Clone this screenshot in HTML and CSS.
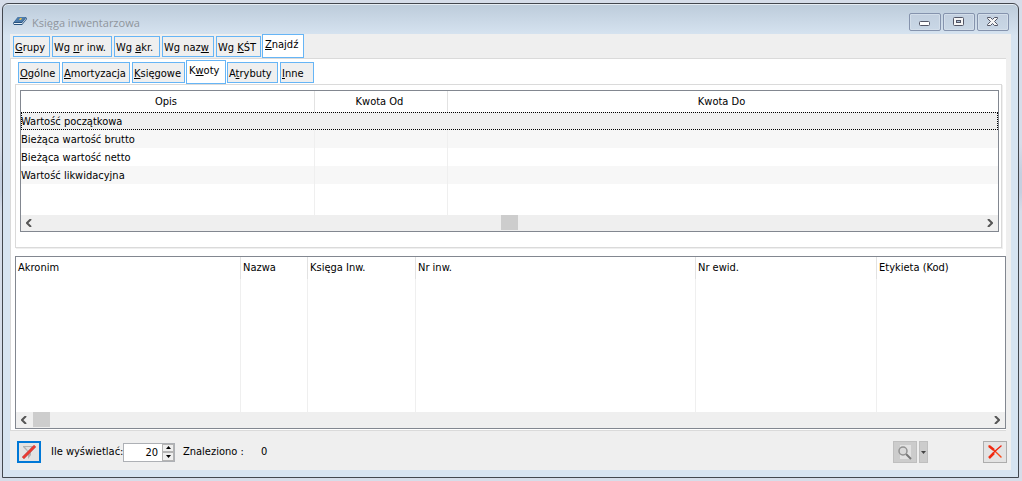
FILE: index.html
```html
<!DOCTYPE html>
<html lang="pl">
<head>
<meta charset="utf-8">
<title>Księga inwentarzowa</title>
<link rel="stylesheet" href="styles.css">
</head>
<body>
<div class="window">
  <header class="titlebar">
    <svg class="app-icon" width="14" height="10" viewBox="0 0 14 10"><path d="M0 7 5 1h8l1 2-5 6H1z" fill="#27527f"/><path d="M1 6 5 1h8L9 6z" fill="#4d7cac"/><path d="M1 7h8l4-5v1L9 8H1z" fill="#e8f0f6"/><path d="M6 4 7 2h2L8 4z" fill="#e2bd52"/></svg>
    <h1 class="title">Księga inwentarzowa</h1>
    <div class="window-buttons">
      <button class="window-button" aria-label="Minimalizuj"><svg width="12" height="10" viewBox="0 0 12 10"><rect x=".5" y="4.500" width="10" height="4" rx="1" fill="#fff" stroke="#535666"/></svg></button>
      <button class="window-button" aria-label="Maksymalizuj"><svg width="12" height="10" viewBox="0 0 12 10"><rect x=".5" y=".5" width="10" height="8" rx="1" fill="#f5f5f5" stroke="#535666"/><rect x="3.500" y="3.500" width="4" height="2" fill="#a9bdd5" stroke="#535666"/></svg></button>
      <button class="window-button" aria-label="Zamknij"><svg width="12" height="10" viewBox="0 0 12 10"><path d="M.5.5h3l2 2 2-2h3v1l-3 3 3 3v1h-3l-2-2-2 2h-3v-1l3-3-3-3z" fill="#f5f5f5" stroke="#535666"/></svg></button>
    </div>
  </header>
  <main class="client">
    <div class="tabs" role="tablist">
      <button class="tab w37" role="tab"><u>G</u>rupy</button>
      <button class="tab w60" role="tab">Wg <u>n</u>r inw.</button>
      <button class="tab w46" role="tab">Wg <u>a</u>kr.</button>
      <button class="tab w52" role="tab">Wg naz<u>w</u></button>
      <button class="tab w45" role="tab">Wg <u>K</u>ŚT</button>
      <button class="tab active w42" role="tab" aria-selected="true"><u>Z</u>najdź</button>
    </div>
    <section class="page">
      <div class="tabs inner-tabs" role="tablist">
        <button class="tab w42" role="tab"><u>O</u>gólne</button>
        <button class="tab w68" role="tab"><u>A</u>mortyzacja</button>
        <button class="tab w53" role="tab"><u>K</u>sięgowe</button>
        <button class="tab active w40" role="tab" aria-selected="true">K<u>w</u>oty</button>
        <button class="tab w51" role="tab">A<u>t</u>rybuty</button>
        <button class="tab w34" role="tab"><u>I</u>nne</button>
      </div>
      <div class="inner-page">
        <div class="list">
          <table class="grid amounts">
            <colgroup><col class="c-opis"><col class="c-od"><col></colgroup>
            <thead><tr><th>Opis</th><th>Kwota Od</th><th>Kwota Do</th></tr></thead>
            <tbody>
              <tr class="selected"><td>Wartość początkowa</td><td></td><td></td></tr>
              <tr class="odd"><td>Bieżąca wartość brutto</td><td></td><td></td></tr>
              <tr><td>Bieżąca wartość netto</td><td></td><td></td></tr>
              <tr class="odd"><td>Wartość likwidacyjna</td><td></td><td></td></tr>
              <tr class="filler"><td></td><td></td><td></td></tr>
            </tbody>
          </table>
          <div class="scrollbar">
            <button class="arrow" aria-label="W lewo"><svg width="7" height="8" viewBox="0 0 7 8"><path d="M5 0 1 4l4 4" fill="none" stroke="#555" stroke-width="2"/></svg></button>
            <div class="track centered"><div class="thumb"></div></div>
            <button class="arrow" aria-label="W prawo"><svg width="7" height="8" viewBox="0 0 7 8"><path d="m2 0 4 4-4 4" fill="none" stroke="#555" stroke-width="2"/></svg></button>
          </div>
        </div>
      </div>
      <div class="list results">
        <table class="grid found">
          <colgroup><col class="c-akronim"><col class="c-nazwa"><col class="c-ksiega"><col class="c-nrinw"><col class="c-ewid"><col></colgroup>
          <thead><tr><th>Akronim</th><th>Nazwa</th><th>Księga Inw.</th><th>Nr inw.</th><th>Nr ewid.</th><th>Etykieta (Kod)</th></tr></thead>
          <tbody><tr class="filler"><td></td><td></td><td></td><td></td><td></td><td></td></tr></tbody>
        </table>
        <div class="scrollbar">
          <button class="arrow" aria-label="W lewo"><svg width="7" height="8" viewBox="0 0 7 8"><path d="M5 0 1 4l4 4" fill="none" stroke="#555" stroke-width="2"/></svg></button>
          <div class="track"><div class="thumb"></div></div>
          <button class="arrow" aria-label="W prawo"><svg width="7" height="8" viewBox="0 0 7 8"><path d="m2 0 4 4-4 4" fill="none" stroke="#555" stroke-width="2"/></svg></button>
        </div>
      </div>
    </section>
    <footer class="footer">
      <button class="tool focused" aria-label="Filtr"><svg width="16" height="16" viewBox="0 0 16 16"><path d="M2 2h12v1l-4 5v3l-3 4V8L2 3z" fill="#b0b0b0"/><path d="M4 3h6L8 8z" fill="#dedede"/><path d="M2 14 14 2" stroke="#b8454a" stroke-width="3"/><path d="M2 14 14 2" stroke="#ee3a30" stroke-width="2"/></svg></button>
      <label class="limit-label" for="limit">Ile wyświetlać:</label>
      <div class="spin">
        <input id="limit" class="spin-input" type="text" value="20">
        <div class="spin-buttons">
          <button class="spin-button" aria-label="Więcej"><svg width="5" height="3" viewBox="0 0 5 3"><path d="M0 3 2.500 0 5 3z"/></svg></button>
          <button class="spin-button" aria-label="Mniej"><svg width="5" height="3" viewBox="0 0 5 3"><path d="M0 0h5L2.500 3z"/></svg></button>
        </div>
      </div>
      <span class="found-label">Znaleziono :</span>
      <output class="found-count">0</output>
      <div class="actions">
        <button class="tool disabled" aria-label="Podgląd"><svg width="16" height="16" viewBox="0 0 16 16"><path d="M3 1h11v14H3z" fill="#e2e2e2"/><path d="m9 10 5 5" stroke="#777" stroke-width="2"/><circle cx="6" cy="7" r="4" fill="#dadada" stroke="#929292" stroke-width="1.500"/></svg></button>
        <button class="tool disabled drop" aria-label="Rozwiń"><svg width="5" height="3" viewBox="0 0 5 3"><path d="M0 0h5L2.500 3z" fill="#444"/></svg></button>
        <button class="tool close" aria-label="Zamknij okno"><svg width="16" height="16" viewBox="0 0 16 16"><path d="M2 2c4 3 8 7 12 11" stroke="#f94a1a" stroke-width="1.500" stroke-linecap="round" fill="none"/><path d="M14 2C10 5 6 9 3 13" stroke="#ee2410" stroke-width="1.500" stroke-linecap="round" fill="none"/><path d="m2 2 5 4M2 14l5-5" stroke="#f02a12" stroke-width="2.500"/></svg></button>
      </div>
    </footer>
  </main>
</div>
</body>
</html>
```
FILE: styles.css
```css
* { box-sizing: border-box; }
body {
  margin: 0;
  min-height: 100vh;
  display: flex;
  padding: 3px 3px 3px 2px;
  background: linear-gradient(#d6dde9 0 30%, #c5cfdf 36% 40%, #d6dde9 44%);
  font: 11px/14px "DejaVu Sans Condensed", "DejaVu Sans", sans-serif;
  font-stretch: condensed;
  color: #000;
}
button, input { font: inherit; color: inherit; margin: 0; padding: 0; border: 0; border-radius: 0; background: none; }
svg { display: block; }

.window {
  flex: 1;
  min-width: 0;
  display: flex;
  flex-direction: column;
  padding: 0 7px 7px;
  border: 1px solid #43474e;
  border-radius: 6px 6px 0 0;
  background: linear-gradient(#bccbda, #d7e4f1 32px);
  box-shadow: inset 0 1px #e6edf4;
}
.titlebar { height: 30px; display: flex; align-items: center; padding: 6px 2px 0 3px; }
.title { flex: 1; margin: 2px 0 0 5px; font: 11px/16px "Open Sans", sans-serif; color: #8f959c; }
.app-icon { margin-bottom: 2px; }
.window-buttons { display: flex; gap: 2px; }
.window-button {
  width: 32px; height: 18px;
  display: flex; align-items: center; justify-content: center;
  border: 1px solid #8593ad; border-radius: 2px;
  background: linear-gradient(#c2cfdf, #c9d7e6);
  box-shadow: inset 0 0 0 1px #d3deea;
}

.client { flex: 1; display: flex; flex-direction: column; background: #efefef; }
.tabs { display: flex; gap: 2px; height: 24px; padding-left: 3px; }
.tab {
  height: 21px; margin-top: 2px; padding: 2px 0 0 1px;
  border: 1px solid #66b5f6; background: #efefef;
  text-align: left; white-space: nowrap;
}
.tab.active { height: 24px; margin: 0 -1px; padding: 0 0 3px 2px; background: #fff; }
.w34 { width: 34px; } .w37 { width: 37px; } .w40 { width: 40px; } .w42 { width: 42px; }
.w45 { width: 45px; } .w46 { width: 46px; } .w51 { width: 51px; } .w52 { width: 52px; }
.w53 { width: 53px; } .w60 { width: 60px; } .w68 { width: 68px; }

.page {
  flex: 1; display: flex; flex-direction: column;
  margin-right: 5px; padding: 1px 0 1px 4px;
  border: 1px solid #dadada; border-right: 0;
  background: #fff;
}
.inner-page {
  margin-right: 4px; padding: 5px 2px 15px 4px;
  border: 1px solid #dadada;
  box-shadow: 1px 1px #efefef;
}
.list { display: flex; flex-direction: column; border: 1px solid #828790; background: #fff; }
.results { flex: 1; margin-top: 8px; display: grid; grid-template-rows: 1fr auto; }
.grid { width: 100%; border-collapse: separate; border-spacing: 0; table-layout: fixed; }
.grid th, .grid td { padding: 0; height: 18px; font-weight: normal; text-align: left; white-space: nowrap; border-right: 1px solid #efefef; }
.grid td { padding-top: 2px; }
.grid th { border-right-color: #e2e2e2; }
.grid th:last-child, .grid td:last-child { border-right: 0; }
.amounts th { height: 21px; padding-right: 3px; text-align: center; }
.odd td { background: #f7f7f7; }
.selected { outline: 1px dotted #000; outline-offset: -1px; background: #efefef; }
.amounts .filler td { height: 31px; }
.c-opis { width: 294px; } .c-od { width: 133px; }
.found th { height: 22px; padding-left: 2px; }
.c-akronim { width: 225px; } .c-nazwa { width: 67px; } .c-ksiega { width: 108px; }
.c-nrinw { width: 280px; } .c-ewid { width: 181px; }

.scrollbar { height: 16px; display: flex; background: #efefef; }
.arrow { width: 17px; display: flex; align-items: center; justify-content: center; }
.track { flex: 1; display: flex; }
.centered { justify-content: center; }
.thumb { width: 17px; height: 15px; background: #cdcdcd; }

.footer { height: 39px; display: flex; align-items: center; padding: 3px 4px 0 7px; }
.tool { width: 24px; height: 22px; display: flex; align-items: center; justify-content: center; border: 1px solid #adadad; background: #e3e3e3; }
.focused { border: 2px solid #0078d7; }
.disabled { border-color: #bfbfbf; background: #cccccc; }
.drop { width: 9px; margin-left: 2px; }
.close { margin-left: 55px; }
.limit-label { width: 72px; margin-left: 10px; white-space: nowrap; }
.spin { width: 52px; height: 19px; display: flex; border: 1px solid #adb0b5; background: #fff; }
.spin-input { flex: 1; min-width: 0; padding: 2px 4px 0 0; text-align: right; outline: 0; }
.spin-buttons { width: 12px; display: grid; grid-template-rows: 1fr 1fr; }
.spin-button { display: flex; align-items: center; justify-content: center; border: 1px solid #b4b4b4; background: #efefef; }
.found-label { width: 60px; margin-left: 8px; white-space: nowrap; }
.found-count { margin-left: 18px; }
.actions { display: flex; margin-left: auto; }
```
